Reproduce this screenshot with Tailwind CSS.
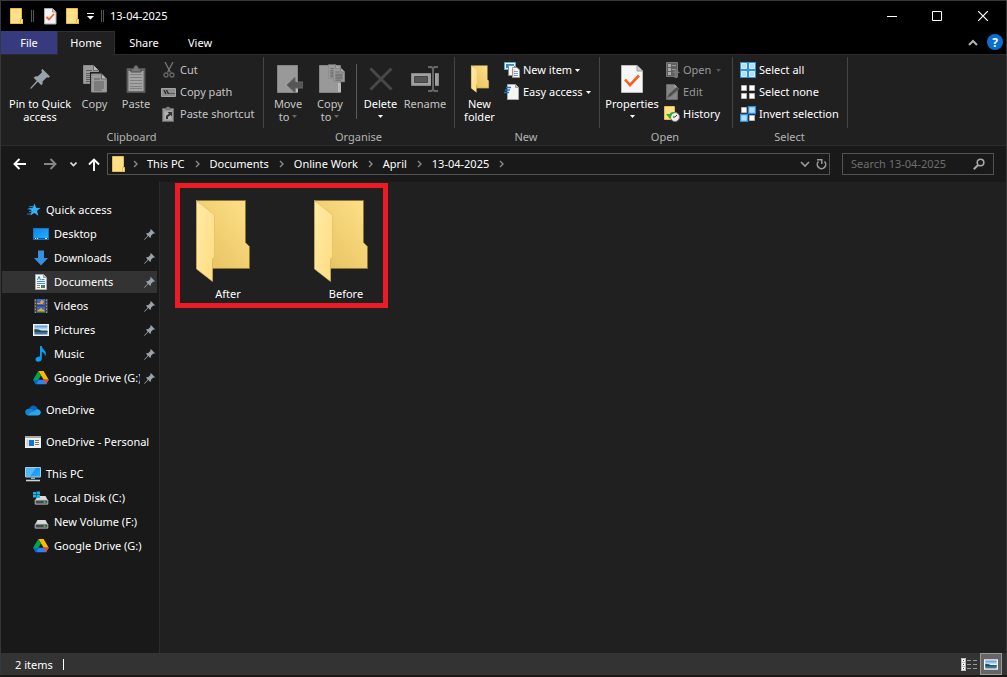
<!DOCTYPE html>
<html lang="en">
<head>
<meta charset="utf-8">
<title>13-04-2025</title>
<script src="https://cdn.jsdelivr.net/npm/@tailwindcss/browser@4"></script>
</head>
<body class="bg-[#1e1614] text-white text-[11px] leading-[13px] font-['Noto_Sans','Open_Sans',sans-serif]">
<svg class="absolute w-0 h-0" aria-hidden="true">
  <defs>
    <linearGradient id="gBack" x1="0" y1="1" x2="1" y2="0"><stop offset="0" stop-color="#e4bf5c"/><stop offset="1" stop-color="#ffe189"/></linearGradient>
    <linearGradient id="gFront" x1="0" y1="0" x2="1" y2="1"><stop offset="0" stop-color="#ffeaa6"/><stop offset="1" stop-color="#ffdd80"/></linearGradient>
    <linearGradient id="gBlue" x1="0" y1="0" x2="1" y2="1"><stop offset="0" stop-color="#0a84e8"/><stop offset="1" stop-color="#2ab0ff"/></linearGradient>
    <linearGradient id="gSky" x1="0" y1="0" x2="0" y2="1"><stop offset="0" stop-color="#4a90e0"/><stop offset=".5" stop-color="#e6f2fa"/><stop offset=".6" stop-color="#3a6f73"/><stop offset="1" stop-color="#3c79b8"/></linearGradient>
  </defs>
  <symbol id="folder-s" viewBox="0 0 16 18"><path d="M1.500 1.500h11v10l1 1v4h-12z" fill="#ffe08a" stroke="#e6bd45"/><path d="M11.500 16.500v-4h2v4z" fill="#ffe9a8" stroke="#e6bd45"/></symbol>
  <symbol id="folder-l" viewBox="0 0 56 84"><path d="M1.500 1.500H50.500V43.500L54.500 47.500V69.500H17V20z" fill="url(#gBack)" stroke="#8d7437" stroke-width="1"/><path d="M1.500 1.500L19.500 16V58L17.500 60V82.500L1.500 70z" fill="url(#gFront)" stroke="#d9b866" stroke-width=".6"/></symbol>
  <symbol id="pin" viewBox="0 0 20 20"><path d="M12.500 0L20 7.500L18.300 8.700L17 8.200L12.700 12.200Q13.200 14.800 11.300 16.300L7.800 12.800L1.200 19.700L.3 19.800L.5 18.700L6.700 11.800L3.600 8.700Q5.200 6.900 7.900 7.300L12 3.200L11.300 1.300z" fill="#98a2aa"/></symbol>
  <symbol id="caret" viewBox="0 0 5 3"><path d="M0 0h5L2.500 3z" fill="currentColor"/></symbol>
  <symbol id="chev" viewBox="0 0 5 8"><path d="M1 1l3 3-3 3" fill="none" stroke="#8a8a8a" stroke-width="1.400"/></symbol>
  <symbol id="page" viewBox="0 0 16 19"><path d="M.5.500h10l5 5v13H.5z" fill="#9b9b9b" stroke="#8a8a8a"/><path d="M10.500.500v5h5" fill="#b9b9b9" stroke="#6a6a6a"/><path d="M3 5.500h6M3 8.500h10M3 10.500h10M3 12.500h10M3 14.500h10M3 16.500h8" stroke="#5d5d5d"/></symbol>
  <symbol id="gdrive" viewBox="0 0 16 14"><path d="M5.300 0h5.300l5.100 8.700h-5z" fill="#ffba00"/><path d="M5.300 0L8 4.500 2.900 13.300.1 8.700z" fill="#00a64a"/><path d="M5.500 8.700h10.200L13.100 13.300H2.900z" fill="#2684fc"/><path d="M10.500 8.700h5.200l-2.600 4.600z" fill="#ea4335"/><path d="M2.900 13.300L5.500 8.700l-2 .4L.1 8.700z" fill="#0066da"/></symbol>
  <symbol id="picture" viewBox="0 0 16 12"><path d="M0 0h16v12H0z" fill="#f4f4f4"/><path d="M1.500 1.500h13v9h-13z" fill="url(#gSky)"/><path d="M1.500 5q5 0 7 2h6v1h-13z" fill="#255045"/></symbol>
  <symbol id="drive" viewBox="0 0 15 10"><path d="M3 0h9l2.500 5H.500z" fill="#d9dadc"/><path d="M.5 4.500h14v4.500h-14z" fill="#45484b" stroke="#c4c6c8"/><path d="M10 6.200h2v1.500h-2z" fill="#35e83c"/></symbol>
</svg>

<div class="flex flex-col h-screen pb-0.5">
  <div class="flex flex-col flex-1 min-h-0 border-x border-t border-[#35383a]">
    <header class="flex flex-col bg-black">
      <div class="flex items-center h-[30px] pl-2">
        <svg class="w-4 h-[18px]"><use href="#folder-s"/></svg>
        <span class="w-[3px] h-3 ml-1.5 border-x border-[#555]"></span>
        <button type="button" class="ml-[9px]" aria-label="Properties"><svg class="w-[14px] h-[17px]" viewBox="0 0 14 17"><path d="M1.500.500h8l3.500 3.500v12H1.500z" fill="#f3f3f3" stroke="#aaa"/><path d="M9.500.500v3.500h3.500" fill="#ccc" stroke="#999"/><path d="M3.500 9l2.500 2.500 5-5.500" fill="none" stroke="#f0642a" stroke-width="1.800"/></svg></button>
        <button type="button" class="ml-2" aria-label="New folder"><svg class="w-4 h-[18px]"><use href="#folder-s"/></svg></button>
        <button type="button" class="ml-1.5" aria-label="Customise toolbar"><svg class="w-[7px] h-[7px]" viewBox="0 0 7 7"><path d="M0 0h7v1H0zM0 3h7L3.500 6.500z" fill="#fff"/></svg></button>
        <span class="w-[3px] h-3 ml-[7px] border-x border-[#555]"></span>
        <h1 class="ml-[6px] text-[11px] leading-4">13-04-2025</h1>
        <div class="flex ml-auto">
          <button type="button" class="grid place-items-center w-[45px] h-[30px]" aria-label="Minimise"><svg class="w-[10px] h-[10px]" viewBox="0 0 10 10"><path d="M0 5.500h10" stroke="#fff"/></svg></button>
          <button type="button" class="grid place-items-center w-[46px] h-[30px]" aria-label="Maximise"><svg class="w-[10px] h-[10px]" viewBox="0 0 10 10"><path d="M.5.500h9v9h-9z" fill="none" stroke="#fff"/></svg></button>
          <button type="button" class="grid place-items-center w-[46px] h-[30px]" aria-label="Close"><svg class="w-[10px] h-[10px]" viewBox="0 0 10 10"><path d="M0 0l10 10M10 0L0 10" stroke="#fff" stroke-width="1.200"/></svg></button>
        </div>
      </div>
      <nav class="flex h-6 text-[11px] border-b border-[#2b2b2b]">
        <button type="button" class="w-14 h-[23px] bg-[#373b7d]">File</button>
        <button type="button" class="w-[58px] h-6 pb-0.5 bg-[#202020] border-x border-t border-[#303030]">Home</button>
        <button type="button" class="w-[58px] h-[23px]">Share</button>
        <button type="button" class="w-[54px] h-[23px]">View</button>
        <button type="button" class="ml-auto" aria-label="Collapse ribbon"><svg class="w-[10px] h-[7px]" viewBox="0 0 10 7"><path d="M1 6l4-4 4 4" fill="none" stroke="#b4b4b4" stroke-width="2"/></svg></button>
        <button type="button" class="grid place-items-center w-4 h-4 mt-[3px] ml-[9px] mr-[3px] rounded-full bg-[#0a6fd0] text-[12px] font-bold" aria-label="Help">?</button>
      </nav>
    </header>

    <section class="flex h-[91px] bg-[#202020] text-[#c6c6c6] border-b border-[#2b2b2b]" aria-label="Ribbon">
      <div class="w-[263px]">
        <div class="flex h-[71px] mt-0.5 pl-[5px] border-r border-[#454545]">
          <button type="button" class="flex flex-col items-center w-[68px] pt-1.5 text-white"><span class="grid place-items-center h-8 mb-0.5"><svg class="w-5 h-5"><use href="#pin"/></svg></span><span>Pin to Quick<br>access</span></button>
          <button type="button" class="flex flex-col items-center w-[41px] pt-1.5"><span class="grid place-items-center h-8 mb-0.5"><svg class="w-6 h-7" viewBox="0 0 24 28"><use href="#page" width="16" height="19"/><path d="M7 7h10l7 7v14H7z" fill="#202020"/><use href="#page" x="8" y="8" width="16" height="20"/></svg></span>Copy</button>
          <button type="button" class="flex flex-col items-center w-[42px] pt-1.5"><span class="grid place-items-center h-8 mb-0.5"><svg class="w-5 h-7" viewBox="0 0 20 28"><path d="M1 3.500h18v24H1z" fill="#676767" stroke="#555"/><path d="M2.500 6h15v20h-15z" fill="#a4a4a4"/><path d="M5 3.500h2.500Q8 .5 10 .5t2.500 3H15V7H5z" fill="#777" stroke="#4c4c4c"/><path d="M4 9.500h12M4 12.500h12M4 15.500h12M4 18.500h12M4 21.500h12M4 23.500h12" stroke="#808080"/></svg></span>Paste</button>
          <div class="flex flex-col pt-0.5 pl-1 leading-4">
            <button type="button" class="flex items-center gap-[3px] h-[22px]"><svg class="w-4 h-4" viewBox="0 0 16 16"><path d="M4 0l5.500 10.500M12 0L6.500 10.500" stroke="#777" stroke-width="1.300"/><circle cx="5" cy="13" r="2" fill="none" stroke="#666" stroke-width="1.300"/><circle cx="11" cy="13" r="2" fill="none" stroke="#666" stroke-width="1.300"/></svg>Cut</button>
            <button type="button" class="flex items-center gap-[3px] h-[22px]"><svg class="w-4 h-4" viewBox="0 0 16 16"><path d="M.5 4.500h14v8H.5z" fill="#8e8e8e" stroke="#a4a4a4"/><path d="M3 6l2 4M5.500 6l2 4" stroke="#202020" stroke-width="1.200"/><path d="M8.500 9h1v1h-1zM10.500 9h1v1h-1zM12.500 9h1v1h-1z" fill="#202020"/></svg>Copy path</button>
            <button type="button" class="flex items-center gap-[3px] h-[22px]"><svg class="w-4 h-4" viewBox="0 0 16 16"><path d="M1.500 2.500h11v13h-11z" fill="#999" stroke="#6a6a6a"/><path d="M4.500 2Q7 -1 9.500 2v2h-5z" fill="#777"/><path d="M3.500 5.500h7v8h-7z" fill="#b4b4b4"/><path d="M5 13V10l3-2.500-1.500-1.500H11v4.500L9.500 9 7 11v2z" fill="#333"/></svg>Paste shortcut</button>
          </div>
        </div>
        <h2 class="pr-0.5 text-center leading-[18px] text-[#b4b4b4]">Clipboard</h2>
      </div>
      <div class="w-[191px]">
        <div class="flex h-[71px] mt-0.5 pl-[3px] border-r border-[#454545]">
          <button type="button" class="flex flex-col items-center w-[42px] pt-1.5"><span class="grid place-items-center h-8 mb-0.5 pl-1"><svg class="w-[26px] h-7" viewBox="0 0 26 28"><path d="M.5.500h20v27H.5z" fill="#999" stroke="#858585"/><path d="M19 16h2v11h-2z" fill="#bbb"/><path d="M10 20l8-7.500v4.500h8v6h-8v4.500z" fill="#555" stroke="#666"/></svg></span><span>Move</span><span class="flex items-center gap-[3px]">to <svg class="w-[5px] h-[3px] text-[#666]"><use href="#caret"/></svg></span></button>
          <button type="button" class="flex flex-col items-center w-[42px] pt-1.5"><span class="grid place-items-center h-8 mb-0.5 pl-1"><svg class="w-[26px] h-[30px]" viewBox="0 0 26 30"><path d="M.5 1.500h21v27H.5z" fill="#999" stroke="#858585"/><path d="M19 19h3v9h-3z" fill="#bbb"/><use href="#page" x="9" y="0" width="12" height="15"/><use href="#page" x="14" y="3" width="12" height="16"/></svg></span><span>Copy</span><span class="flex items-center gap-[3px]">to <svg class="w-[5px] h-[3px] text-[#666]"><use href="#caret"/></svg></span></button>
          <span class="w-px h-[55px] mt-[7px] ml-[5px] mr-0.5 bg-[#5a5a5a]"></span>
          <button type="button" class="flex flex-col items-center w-[43px] pt-1.5 text-white"><span class="grid place-items-center h-8 mb-0.5"><svg class="w-6 h-6" viewBox="0 0 24 24"><path d="M1.500 1.500l21 21M22.500 1.500l-21 21" stroke="#484848" stroke-width="3"/></svg></span>Delete<svg class="w-[5px] h-[3px] mt-[5px]"><use href="#caret"/></svg></button>
          <button type="button" class="flex flex-col items-center w-[46px] pt-1.5"><span class="grid place-items-center h-8 mb-0.5"><svg class="w-7 h-[26px]" viewBox="0 0 28 26"><path d="M.5 7.500h27v12H.5z" fill="#a0a0a0" stroke="#888"/><path d="M3.500 10.500h13v6h-13z" fill="#555" stroke="#444"/><path d="M17 1h3.500l1.500 1.500L23.500 1H27M22 2v22M17 25h3.500l1.500-1.500 1.500 1.500H27" fill="none" stroke="#202020" stroke-width="4"/><path d="M17 1h3.500l1.500 1.500L23.500 1H27M22 2v22M17 25h3.500l1.500-1.500 1.500 1.500H27" fill="none" stroke="#666" stroke-width="2"/></svg></span>Rename</button>
        </div>
        <h2 class="pr-0.5 text-center leading-[18px] text-[#b4b4b4]">Organise</h2>
      </div>
      <div class="w-[145px] text-white">
        <div class="flex h-[71px] mt-0.5 pl-1 border-r border-[#454545]">
          <button type="button" class="flex flex-col items-center w-[41px] pt-1.5"><span class="grid place-items-center h-8 mb-0.5"><svg class="w-5 h-7"><use href="#folder-l"/></svg></span><span>New<br>folder</span></button>
          <div class="flex flex-col pt-0.5 pl-1 leading-4">
            <button type="button" class="flex items-center gap-[3px] h-[22px]"><svg class="w-4 h-4" viewBox="0 0 16 16"><path d="M.5.500h11v7H.5z" fill="#e8f4ff" stroke="#5aa7dc"/><path d="M2 2h8v4H2z" fill="#3488c8"/><path d="M4.500 3.500h5l2 2v8h-7z" fill="#f4f4f4" stroke="#888"/><path d="M8.500 5.500h4.500l2.500 2.500v7.500h-7z" fill="#fff" stroke="#999"/><path d="M10 9.500h4M10 11.500h4M10 13.500h4" stroke="#6ba3dc"/><path d="M10 7v8" stroke="#e07a7a" stroke-width=".6"/></svg>New item <svg class="w-[5px] h-[3px]"><use href="#caret"/></svg></button>
            <button type="button" class="flex items-center gap-[3px] h-[22px]"><svg class="w-4 h-4" viewBox="0 0 16 16"><path d="M3.500.500h8l3 3v12h-11z" fill="#f4f4f4" stroke="#aaa"/><path d="M11.500.500v3h3" fill="#ccc" stroke="#999"/><path d="M2 3.500h5M1 6h5M0 8.500h5" stroke="#1f74c4" stroke-width="1.400"/></svg>Easy access <svg class="w-[5px] h-[3px]"><use href="#caret"/></svg></button>
          </div>
        </div>
        <h2 class="pr-[3px] text-center leading-[18px] text-[#b4b4b4]">New</h2>
      </div>
      <div class="w-[133px]">
        <div class="flex h-[71px] mt-0.5 pl-0.5 border-r border-[#454545]">
          <button type="button" class="flex flex-col items-center w-[60px] pt-1.5 text-white"><span class="grid place-items-center h-8 mb-0.5"><svg class="w-[22px] h-7" viewBox="0 0 22 28"><path d="M.5.500h15.500l5.500 5.500v21.500H.5z" fill="#f6f6f8" stroke="#bbb"/><path d="M16 .5v5.500h5.500" fill="#d0d0d0" stroke="#999"/><path d="M4 14.500l5 5.500 9-9.500" fill="none" stroke="#f4601d" stroke-width="2.600"/></svg></span>Properties<svg class="w-[5px] h-[3px] mt-[5px]"><use href="#caret"/></svg></button>
          <div class="flex flex-col pt-0.5 pl-0.5 leading-4">
            <button type="button" class="flex items-center gap-[3px] h-[22px] text-[#999]"><svg class="w-4 h-4" viewBox="0 0 16 16"><path d="M2.500.500h11v14h-11z" fill="#606060" stroke="#777"/><path d="M4 2h3v3H4zM4 6h3v3H4zM4 10h3v3H4z" fill="#aaa"/><path d="M8 3.500h4M8 7.500h4" stroke="#999"/><path d="M12 7l4 4h-2.500v5h-3v-5H8z" fill="#777"/></svg>Open <svg class="w-[5px] h-[3px] ml-0.5 text-[#555]"><use href="#caret"/></svg></button>
            <button type="button" class="flex items-center gap-[3px] h-[22px] text-[#999]"><svg class="w-4 h-4" viewBox="0 0 16 16"><path d="M2.500.500h8l3 3v12h-11z" fill="#858585" stroke="#6c6c6c"/><path d="M10.500.500v3h3" fill="#aaa"/><path d="M3 14l2-4 8-7 2 2-8 7z" fill="#4c4c4c" stroke="#707070" stroke-width=".6"/></svg>Edit</button>
            <button type="button" class="flex items-center gap-[3px] h-[22px] text-white"><svg class="w-4 h-4" viewBox="0 0 16 16"><path d="M.5.500h10v13H.5z" fill="#ffe08a" stroke="#e6bd45"/><circle cx="11" cy="11" r="4.500" fill="#eee" stroke="#777"/><path d="M11 11l2-2M11 11H9" stroke="#333"/><path d="M2 8l4 5 1.500-3.500Q8 7 11 7 8 4.500 5.500 8z" fill="#2fb02f"/></svg>History</button>
          </div>
        </div>
        <h2 class="pr-[3px] text-center leading-[18px] text-[#b4b4b4]">Open</h2>
      </div>
      <div class="w-[115px] text-white">
        <div class="flex flex-col h-[71px] mt-0.5 pt-0.5 pl-[7px] leading-4 border-r border-[#454545]">
          <button type="button" class="flex items-center gap-[3px] h-[22px]"><svg class="w-4 h-4" viewBox="0 0 16 16"><path d="M0 0h16v16H0z" fill="#2f91e0"/><path d="M1.500 1.500h5v5h-5zM9.500 1.500h5v5h-5zM1.500 9.500h5v5h-5zM9.500 9.500h5v5h-5z" fill="#b5defc" stroke="#d9efff"/></svg>Select all</button>
          <button type="button" class="flex items-center gap-[3px] h-[22px]"><svg class="w-4 h-4" viewBox="0 0 16 16"><path d="M1.500 1.500h5v5h-5zM9.500 1.500h5v5h-5zM1.500 9.500h5v5h-5zM9.500 9.500h5v5h-5z" fill="#fff" stroke="#b4b4b4"/></svg>Select none</button>
          <button type="button" class="flex items-center gap-[3px] h-[22px]"><svg class="w-4 h-4" viewBox="0 0 16 16"><path d="M1.500 1.500h5v5h-5zM9.500 9.500h5v5h-5z" fill="#fff" stroke="#b4b4b4"/><path d="M8.500.500h7v7h-7zM.5 8.500h7v7h-7z" fill="#b5defc" stroke="#2f91e0" stroke-width="1.400"/></svg>Invert selection</button>
        </div>
        <h2 class="pr-0.5 text-center leading-[18px] text-[#b4b4b4]">Select</h2>
      </div>
    </section>

    <div class="flex items-center h-9 pl-3 pr-3 bg-[#191919]">
      <button type="button" aria-label="Back"><svg class="w-[13px] h-3" viewBox="0 0 13 12"><path d="M1 6h12M6.500 1L1.500 6l5 5" fill="none" stroke="#fff" stroke-width="1.900"/></svg></button>
      <button type="button" class="ml-[18px]" aria-label="Forward"><svg class="w-[13px] h-3" viewBox="0 0 13 12"><path d="M0 6h12M6.500 1l5 5-5 5" fill="none" stroke="#868686" stroke-width="1.900"/></svg></button>
      <button type="button" class="ml-[13px]" aria-label="Recent locations"><svg class="w-[7px] h-[5px]" viewBox="0 0 7 5"><path d="M.5.500l3 3 3-3" fill="none" stroke="#ddd" stroke-width="1.600"/></svg></button>
      <button type="button" class="ml-[11px]" aria-label="Up"><svg class="w-3 h-[13px]" viewBox="0 0 12 13"><path d="M6 13V1.500M1 6.500l5-5 5 5" fill="none" stroke="#fff" stroke-width="1.900"/></svg></button>
      <div class="flex flex-1 items-center h-[22px] ml-[7px] pl-[3px] border border-[#535353]">
        <svg class="w-4 h-[18px]"><use href="#folder-s"/></svg>
        <ol class="flex items-center flex-1 leading-4">
          <li class="flex items-center"><svg class="w-[5px] h-2 ml-[6px] mr-[9px]"><use href="#chev"/></svg></li>
          <li class="flex items-center"><a href="#">This PC</a><svg class="w-[5px] h-2 mx-[10px]"><use href="#chev"/></svg></li>
          <li class="flex items-center"><a href="#">Documents</a><svg class="w-[5px] h-2 mx-[10px]"><use href="#chev"/></svg></li>
          <li class="flex items-center"><a href="#">Online Work</a><svg class="w-[5px] h-2 mx-[10px]"><use href="#chev"/></svg></li>
          <li class="flex items-center"><a href="#">April</a><svg class="w-[5px] h-2 mx-[10px]"><use href="#chev"/></svg></li>
          <li class="flex items-center"><a href="#">13-04-2025</a><svg class="w-[5px] h-2 mx-[10px]"><use href="#chev"/></svg></li>
        </ol>
        <button type="button" class="mr-1.5" aria-label="Previous locations"><svg class="w-[10px] h-[7px]" viewBox="0 0 10 7"><path d="M1 1l4 4 4-4" fill="none" stroke="#999" stroke-width="1.700"/></svg></button>
        <button type="button" class="mr-0.5" aria-label="Refresh"><svg class="w-[11px] h-3" viewBox="0 0 11 12"><path d="M8.500 3.500A4.200 4.200 0 1 1 2.500 3.500" fill="none" stroke="#999" stroke-width="1.600"/><path d="M1 1.700h4.800v4.300" fill="none" stroke="#999" stroke-width="1.500"/></svg></button>
      </div>
      <div class="flex items-center w-[152px] h-[22px] ml-3 px-2 border border-[#535353]">
        <input type="text" aria-label="Search" placeholder="Search 13-04-2025" class="flex-1 min-w-0 leading-4 bg-transparent outline-none placeholder:text-[#6e6e6e]">
        <svg class="w-3 h-3" viewBox="0 0 12 12"><circle cx="7.500" cy="4.500" r="3.300" fill="none" stroke="#a8a8a8" stroke-width="1.600"/><path d="M5 7L.8 11.200" stroke="#a8a8a8" stroke-width="2"/></svg>
      </div>
    </div>

    <div class="flex flex-1 min-h-0 bg-[#202020]">
      <nav class="flex flex-col gap-2 w-[159px] pt-4 pl-px pr-0.5 bg-[#191919] border-r border-[#2b2b2b] leading-4 whitespace-nowrap" aria-label="Folders">
        <ul>
          <li><a href="#" class="flex items-center gap-[5px] h-6 pl-[23px]"><svg class="w-4 h-4" viewBox="0 0 16 16"><path d="M9.500 1.500l1.600 4.200 4.400.2-3.400 2.900 1.200 5-4-2.800-4 2.600 1.400-4.500L3.200 6l4.500-.2z" fill="#35b0f5"/><path d="M4 4.500h4M2.500 7h4M4 9.500h3M2 12h4" stroke="#1583c6"/></svg>Quick access</a></li>
          <li><a href="#" class="flex items-center gap-[5px] h-6 pl-[31px] pr-0.5"><svg class="w-4 h-4 shrink-0" viewBox="0 0 16 16"><path d="M.5 2.500h15v11H.5z" fill="url(#gBlue)" stroke="#1478c8"/><path d="M1 12.500h14" stroke="#0b5795"/><path d="M2 12.500h1M4 12.500h1M12 12.500h2" stroke="#fff"/></svg><span class="flex-1">Desktop</span><svg class="w-[11px] h-[11px]"><use href="#pin"/></svg></a></li>
          <li><a href="#" class="flex items-center gap-[5px] h-6 pl-[31px] pr-0.5"><svg class="w-4 h-4 shrink-0" viewBox="0 0 16 16"><path d="M5 .5h6V8h4L8 15.500 1 8h4z" fill="#3590e0"/></svg><span class="flex-1">Downloads</span><svg class="w-[11px] h-[11px]"><use href="#pin"/></svg></a></li>
          <li class="py-px"><a href="#" class="flex items-center gap-[5px] h-[22px] pl-[31px] pr-0.5 bg-[#333]"><svg class="w-4 h-4 shrink-0" viewBox="0 0 16 16"><path d="M2.500.500h8l3 3v12h-11z" fill="#f6f6f6" stroke="#aaa"/><path d="M10.500.500v3h3" fill="#ccc" stroke="#999"/><path d="M4.500 6L6 2.500 7.500 6" fill="none" stroke="#2a83cc"/><path d="M8.500 5.500h3M4 7.500h8M4 9.500h8" stroke="#3d92d8"/><path d="M4 11.500h3M4 13.500h3" stroke="#888"/><path d="M8 11h4v3H8z" fill="#507b70"/></svg><span class="flex-1">Documents</span><svg class="w-[11px] h-[11px]"><use href="#pin"/></svg></a></li>
          <li><a href="#" class="flex items-center gap-[5px] h-6 pl-[31px] pr-0.5"><svg class="w-4 h-4 shrink-0" viewBox="0 0 16 16"><path d="M1 1h14v14H1z" fill="#444"/><path d="M2.500 1.500v14M13.500 1.500v14" stroke="#999" stroke-dasharray="1.500 1.500"/><path d="M4 1h8v6H4zM4 8.500h8V15H4z" fill="#3a68d0"/><path d="M4 5h3l1-3 3 1-1 3H4zM4 13l4-3 4 3v2H4z" fill="#d9a642"/><path d="M4 13.500h8V15H4z" fill="#2d6d46"/></svg><span class="flex-1">Videos</span><svg class="w-[11px] h-[11px]"><use href="#pin"/></svg></a></li>
          <li><a href="#" class="flex items-center gap-[5px] h-6 pl-[31px] pr-0.5"><svg class="w-4 h-3 shrink-0"><use href="#picture"/></svg><span class="flex-1">Pictures</span><svg class="w-[11px] h-[11px]"><use href="#pin"/></svg></a></li>
          <li><a href="#" class="flex items-center gap-[5px] h-6 pl-[31px] pr-0.5"><svg class="w-4 h-4 shrink-0" viewBox="0 0 16 16"><path d="M7 0h1.800Q9 2.500 11.500 4.500 14 7 12 10.500 12 7 8.800 5.800V12.500Q8.500 15.800 5.200 15.800 2.300 15.500 2.500 13 3.200 10.500 7 10.500z" fill="#0a9df5"/></svg><span class="flex-1">Music</span><svg class="w-[11px] h-[11px]"><use href="#pin"/></svg></a></li>
          <li><a href="#" class="flex items-center h-6 pl-[31px] pr-0.5"><svg class="w-4 h-[14px] shrink-0 mr-[5px]"><use href="#gdrive"/></svg><span class="flex-1 min-w-0 overflow-hidden">Google Drive (G:)</span><svg class="w-[11px] h-[11px] shrink-0 ml-1"><use href="#pin"/></svg></a></li>
        </ul>
        <a href="#" class="flex items-center gap-[5px] h-6 pl-[23px]"><svg class="w-4 h-[11px]" viewBox="0 0 16 11"><path d="M4 4Q5.500.500 8.500.500 11.500.700 12.500 4L8 8z" fill="#0f64b8"/><path d="M.2 7Q.3 4 4 3.700 7 3.500 10 6L4 10.500Q.4 10.500.2 7z" fill="#1284d8"/><path d="M3 10.500Q5 7 8.500 6.500L12 4Q15.800 4.500 15.800 7.500 15.500 10.500 12.500 10.500z" fill="#2aa5ec"/></svg>OneDrive</a>
        <a href="#" class="flex items-center gap-[5px] h-6 pl-[23px]"><svg class="w-4 h-3" viewBox="0 0 16 12"><path d="M0 0h16v12H0z" fill="#f0f0f0"/><path d="M0 0h16v2H0z" fill="#a8a8a8"/><path d="M1.500 3.500h2v7h-2z" fill="#ccc"/><path d="M4 4h5v6H4z" fill="#1372cf"/><path d="M10 4.500h4M10 6.500h4M10 8.500h4" stroke="#777"/></svg>OneDrive - Personal</a>
        <ul>
          <li><a href="#" class="flex items-center gap-[5px] h-6 pl-[23px]"><svg class="w-4 h-4" viewBox="0 0 16 16"><path d="M.5 1.500h15v9.500H.5z" fill="url(#gBlue)" stroke="#a8cbe2"/><path d="M1 2h10L5 10.500H1z" fill="#7fd0fb" opacity=".6"/><path d="M6 11.500h4v1.500H6z" fill="#9cb3c2"/><path d="M1 14.500h14" stroke="#c9d4db" stroke-width="1.600"/></svg>This PC</a></li>
          <li><a href="#" class="flex items-center gap-[5px] h-6 pl-[31px]"><svg class="w-4 h-4" viewBox="0 0 16 16"><use href="#drive" x="1" y="6" width="15" height="9"/><path d="M0 2h3v2.500H0zM3.500 1.500H7v3H3.500zM0 5h3v2.500H0zM3.500 5H7v3H3.500z" fill="#13b6ee"/></svg>Local Disk (C:)</a></li>
          <li><a href="#" class="flex items-center gap-[5px] h-6 pl-[31px]"><svg class="w-4 h-4" viewBox="0 0 16 16"><use href="#drive" x="1" y="6" width="15" height="9"/></svg>New Volume (F:)</a></li>
          <li><a href="#" class="flex items-center gap-[5px] h-6 pl-[31px]"><svg class="w-4 h-[14px]"><use href="#gdrive"/></svg>Google Drive (G:)</a></li>
        </ul>
      </nav>
      <main class="flex-1 pt-px pl-[15px]">
        <div class="flex gap-11 w-[213px] h-[125px] pt-[11px] pl-[11px] border-5 border-[#ed1c24]">
          <a href="#" class="flex flex-col w-[74px] shrink-0 text-center"><svg class="w-14 h-[84px] ml-1 mb-[3px]"><use href="#folder-l"/></svg><span class="leading-4">After</span></a>
          <a href="#" class="flex flex-col w-[74px] shrink-0 text-center"><svg class="w-14 h-[84px] ml-1 mb-[3px]"><use href="#folder-l"/></svg><span class="leading-4">Before</span></a>
        </div>
      </main>
    </div>

    <footer class="flex items-center h-[22px] pl-[14px] pr-1 bg-[#333]">
      <span>2 items</span><span class="w-px h-[11px] ml-[10px] bg-white"></span>
      <button type="button" class="ml-auto mr-[3px]" aria-label="Details view"><svg class="w-4 h-[13px]" viewBox="0 0 16 13"><path d="M0 0h5v13H0z" fill="#bbb"/><path d="M1 1h3v3H1zM1 5h3v3H1zM1 9h3v3H1z" fill="#fff"/><path d="M2 2h1v1H2zM2 6h1v1H2zM2 10h1v1H2z" fill="#555"/><path d="M6 2.500h4M12 2.500h4M6 6.500h4M12 6.500h4M6 10.500h4M12 10.500h4" stroke="#999"/></svg></button>
      <button type="button" class="grid place-items-center w-[22px] h-[22px] bg-[#666] border border-[#999]" aria-label="Large icons view"><svg class="w-[14px] h-[11px]"><use href="#picture"/></svg></button>
    </footer>
  </div>
</div>
</body>
</html>
